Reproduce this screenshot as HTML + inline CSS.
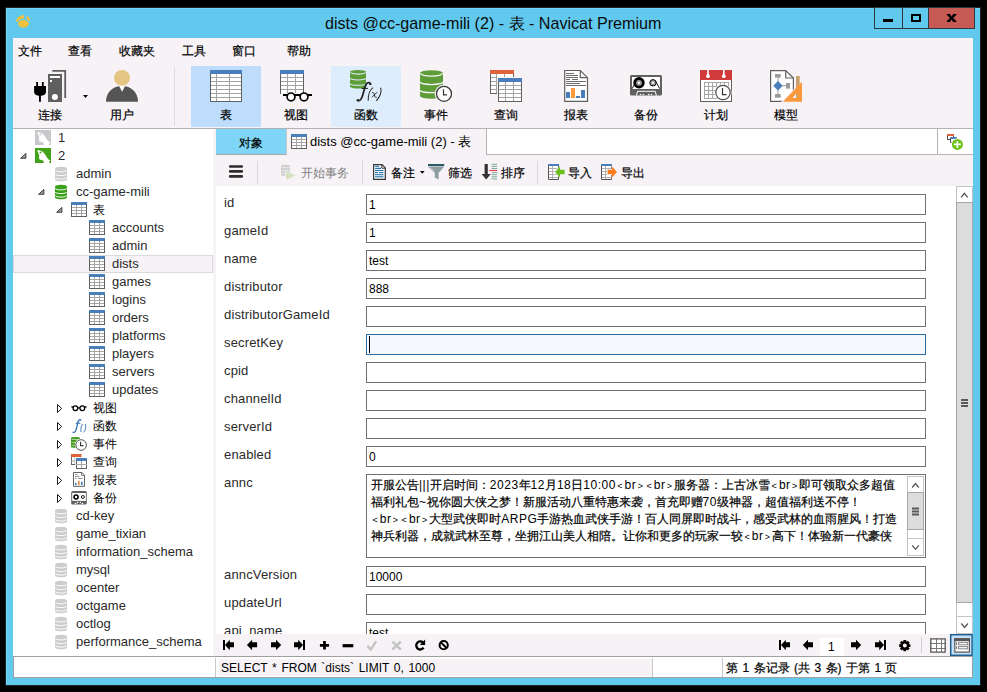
<!DOCTYPE html>
<html><head><meta charset="utf-8">
<style>
*{margin:0;padding:0;box-sizing:border-box}
html,body{width:987px;height:692px;overflow:hidden;background:#000}
body{position:relative;font-family:"Liberation Sans",sans-serif;font-size:12px;color:#000}
.a{position:absolute;white-space:nowrap}
#frame{left:5px;top:7px;width:976px;height:679px;background:#62c9ee;border:1px solid #1e2426}
#frame:after{content:"";position:absolute;left:0;top:0;right:0;bottom:0;border-left:1px solid #6fd6fb;border-top:1px solid #6fd6fb}
#title{left:325px;top:13px;font-size:16.1px;color:#0b0b0b}
#content{left:13px;top:38px;width:960px;height:640px;background:#f6f2f6}
.menu{top:43px;font-size:12px}
.tbl{top:107px;font-size:12px}
.wbtn{top:7px;height:22px;border:1px solid #2b3a40;background:#62c9ee}
svg{position:absolute;left:0;top:0}
.cj{-webkit-text-stroke:0.2px #000}
.tr{font-size:13px;line-height:18px;color:#2a2a2a}
.tr.cj{color:#000}
.fl{font-size:13px;line-height:18px;letter-spacing:0.15px;color:#2a2a2a}
.fv{font-size:12px;line-height:21px}
.an{font-size:12px;line-height:17px}
.asc{letter-spacing:0.5px;-webkit-text-stroke:0}
.lt{font-size:9px;padding:0 1.6px 0 1.4px;vertical-align:0.5px}
.t2{font-size:12px;line-height:16px}
.t2g{font-size:12px;line-height:16px}
</style></head><body>
<div id="frame" class="a"></div>
<svg width="987" height="60"><ellipse cx="23.4" cy="23.8" rx="5.3" ry="3.9" fill="#f2c13c"/><path d="M16.1 21.6 C16.4 18 19.5 15.3 23.9 15 V18.6 C20.8 18.9 18.6 20 17.6 21.8Z" fill="#f2c13c"/><path d="M27.4 15.9 C29.4 16.9 30.2 19.2 29.8 22 C29 20.6 27.6 19.6 26.1 18.8Z" fill="#f2c13c"/></svg>
<div id="title" class="a">dists @cc-game-mili (2) - 表 - Navicat Premium</div>
<div class="a wbtn" style="left:874px;width:29px"></div>
<div class="a" style="left:883px;top:19px;width:10px;height:3px;background:#000"></div>
<div class="a wbtn" style="left:903px;width:26px;border-left:none"></div>
<div class="a" style="left:911px;top:14px;width:10px;height:8px;border:2px solid #000"></div>
<div class="a wbtn" style="left:929px;width:46px;background:#c75a54;border-left:none"></div>
<svg width="987" height="40"><path d="M946.9 14 H950 L951.6 16.4 L953.2 14 H956.3 V15 L953.2 18 L956.3 21 V22 H953.2 L951.6 19.6 L950 22 H946.9 V21 L950 18 L946.9 15Z" fill="#000"/></svg>
<div id="content" class="a"></div>
<div class="a menu cj" style="left:18px">文件</div>
<div class="a menu cj" style="left:68px">查看</div>
<div class="a menu cj" style="left:119px">收藏夹</div>
<div class="a menu cj" style="left:182px">工具</div>
<div class="a menu cj" style="left:232px">窗口</div>
<div class="a menu cj" style="left:287px">帮助</div>
<div class="a" style="left:174px;top:67px;width:1px;height:59px;background:#dcdcdc"></div>
<div class="a" style="left:191px;top:66px;width:70px;height:61px;background:#bedcfb"></div>
<div class="a" style="left:331px;top:66px;width:70px;height:61px;background:#ddedfc"></div>
<div class="a tbl cj" style="left:38px">连接</div>
<div class="a tbl cj" style="left:110px">用户</div>
<div class="a tbl cj" style="left:220px">表</div>
<div class="a tbl cj" style="left:284px">视图</div>
<div class="a tbl cj" style="left:354px">函数</div>
<div class="a tbl cj" style="left:424px">事件</div>
<div class="a tbl cj" style="left:494px">查询</div>
<div class="a tbl cj" style="left:564px">报表</div>
<div class="a tbl cj" style="left:634px">备份</div>
<div class="a tbl cj" style="left:704px">计划</div>
<div class="a tbl cj" style="left:774px">模型</div>
<svg width="987" height="692"><path d="M52.3 70 H66.1 V98 H64.3 V71.8 H52.3Z" fill="#606060"/><rect x="48" y="74" width="14" height="28" fill="#606060"/><rect x="50" y="76" width="10" height="2" fill="#fff"/><rect x="50" y="80" width="2" height="2" fill="#fff"/><circle cx="54.9" cy="96.9" r="3" fill="#fff"/><rect x="36.2" y="82" width="1.8" height="4.5" fill="#000"/><rect x="41.9" y="82" width="1.8" height="4.5" fill="#000"/><path d="M34.1 86 H46 V91.5 C46 94.5 43.5 95.8 40 95.8 C36.5 95.8 34.1 94.5 34.1 91.5Z" fill="#000"/><rect x="39" y="95" width="1.9" height="6.8" fill="#000"/><path d="M83 95 H88 L85.5 98Z" fill="#000"/><circle cx="122" cy="77.9" r="8" fill="#e5c583"/><path d="M106 101.8 C106 92 113 86 122 86 C131 86 138 92 138 101.8Z" fill="#545454"/><path d="M119 85.8 H125.2 L122.1 91.7Z" fill="#fff"/><rect x="210" y="70" width="32" height="32" fill="#fff"/><rect x="216" y="70" width="1" height="32" fill="#a3a3a3"/><rect x="229" y="70" width="1" height="32" fill="#a3a3a3"/><rect x="210" y="77" width="32" height="1" fill="#a3a3a3"/><rect x="210" y="81" width="32" height="1" fill="#a3a3a3"/><rect x="210" y="85" width="32" height="1" fill="#a3a3a3"/><rect x="210" y="89" width="32" height="1" fill="#a3a3a3"/><rect x="210" y="93" width="32" height="1" fill="#a3a3a3"/><rect x="210" y="97" width="32" height="1" fill="#a3a3a3"/><rect x="210" y="70" width="1" height="32" fill="#606060"/><rect x="241" y="70" width="1" height="32" fill="#606060"/><rect x="210" y="101" width="32" height="1" fill="#606060"/><rect x="210" y="70" width="32" height="4" fill="#4a7ebb"/><rect x="280" y="70" width="24" height="24" fill="#fff"/><rect x="287" y="70" width="1" height="24" fill="#a3a3a3"/><rect x="295" y="70" width="1" height="24" fill="#a3a3a3"/><rect x="280" y="77" width="24" height="1" fill="#a3a3a3"/><rect x="280" y="81" width="24" height="1" fill="#a3a3a3"/><rect x="280" y="85" width="24" height="1" fill="#a3a3a3"/><rect x="280" y="89" width="24" height="1" fill="#a3a3a3"/><rect x="280" y="70" width="1" height="24" fill="#606060"/><rect x="303" y="70" width="1" height="24" fill="#606060"/><rect x="280" y="93" width="24" height="1" fill="#606060"/><rect x="280" y="70" width="24" height="4" fill="#4a7ebb"/><path d="M281 93 H313 V103 H281Z" fill="#f6f2f6"/><rect x="280" y="93" width="1" height="1" fill="#606060"/><path d="M283 95 h29" stroke="#000" stroke-width="2"/><circle cx="291" cy="96.9" r="3.9" fill="#fff" stroke="#000" stroke-width="1.7"/><circle cx="304" cy="96.9" r="3.9" fill="#fff" stroke="#000" stroke-width="1.7"/><path d="M350 71.92 A8.0 1.92 0 0 1 366 71.92 V86.58 A8.0 1.92 0 0 1 350 86.58Z" fill="#5e9c38"/><path d="M350.6 72.22 A7.4 1.92 0 0 0 365.4 72.22" fill="none" stroke="#ddedfc" stroke-width="1.1"/><path d="M350 78.1 A8.0 1.92 0 0 0 366 78.1" fill="none" stroke="#ddedfc" stroke-width="1.1"/><path d="M350 83.4 A8.0 1.92 0 0 0 366 83.4" fill="none" stroke="#ddedfc" stroke-width="1.1"/><path d="M358 101 L366.5 88 L370 84 L372 90 L362 102Z" fill="#ddedfc"/><path d="M370.2 83.6 C369.8 82 367.2 82.2 366 84.5 C364.8 86.8 364 91 362.6 95.5 C361.6 98.8 360.4 100.8 358.2 100.8" fill="none" stroke="#262626" stroke-width="1.8"/><circle cx="370.3" cy="83.9" r="1.25" fill="#262626"/><circle cx="357.8" cy="100.2" r="1.25" fill="#262626"/><path d="M361.6 88.4 H367.9" stroke="#262626" stroke-width="1.1"/><path d="M373 87.6 C369.5 90 368 93 368.2 100.8" fill="none" stroke="#333" stroke-width="1.1"/><path d="M380.6 87.6 C382 91.5 380 97 376.3 100.8" fill="none" stroke="#333" stroke-width="1.1"/><path d="M372.2 92.6 C373.6 92.2 374 93 374.4 95 C374.8 97 375.2 97.6 376.8 97.2 M377.4 92.4 C376 93 373.5 95.5 372 97.4" fill="none" stroke="#333" stroke-width="1"/><path d="M420 73.06 A11.5 2.76 0 0 1 443 73.06 V95.93999999999998 A11.5 2.76 0 0 1 420 95.93999999999998Z" fill="#5e9c38"/><path d="M420.6 73.36 A10.9 2.76 0 0 0 442.4 73.36" fill="none" stroke="#f6f2f6" stroke-width="1.3"/><path d="M420 81.8 A11.5 2.76 0 0 0 443 81.8" fill="none" stroke="#f6f2f6" stroke-width="1.3"/><path d="M420 89.9 A11.5 2.76 0 0 0 443 89.9" fill="none" stroke="#f6f2f6" stroke-width="1.3"/><circle cx="444" cy="93.8" r="9.299999999999999" fill="#f6f2f6"/><circle cx="444" cy="93.8" r="7.5" fill="#fff" stroke="#3a3a3a" stroke-width="1.3"/><path d="M443.5 89.3 V94.8 H447" fill="none" stroke="#333" stroke-width="1.2"/><rect x="490" y="70" width="24" height="24" fill="#fff"/><rect x="496" y="70" width="1" height="24" fill="#a3a3a3"/><rect x="504" y="70" width="1" height="24" fill="#a3a3a3"/><rect x="490" y="77" width="24" height="1" fill="#a3a3a3"/><rect x="490" y="81" width="24" height="1" fill="#a3a3a3"/><rect x="490" y="85" width="24" height="1" fill="#a3a3a3"/><rect x="490" y="89" width="24" height="1" fill="#a3a3a3"/><rect x="490" y="70" width="1" height="24" fill="#606060"/><rect x="513" y="70" width="1" height="24" fill="#606060"/><rect x="490" y="93" width="24" height="1" fill="#606060"/><rect x="490" y="70" width="24" height="4" fill="#e0623a"/><rect x="497" y="77" width="26" height="26" fill="#f6f2f6"/><rect x="498" y="78" width="24" height="24" fill="#fff"/><rect x="505" y="78" width="1" height="24" fill="#a3a3a3"/><rect x="513" y="78" width="1" height="24" fill="#a3a3a3"/><rect x="498" y="85" width="24" height="1" fill="#a3a3a3"/><rect x="498" y="89" width="24" height="1" fill="#a3a3a3"/><rect x="498" y="93" width="24" height="1" fill="#a3a3a3"/><rect x="498" y="97" width="24" height="1" fill="#a3a3a3"/><rect x="498" y="78" width="1" height="24" fill="#606060"/><rect x="521" y="78" width="1" height="24" fill="#606060"/><rect x="498" y="101" width="24" height="1" fill="#606060"/><rect x="498" y="78" width="24" height="4" fill="#4a7ebb"/><path d="M564.7 70.5 H580.3 L587.5 77.7 V101.3 H564.7Z" fill="#fff" stroke="#606060" stroke-width="1.2"/><path d="M580.3 70.5 V77.7 H587.5" fill="none" stroke="#606060" stroke-width="1.2"/><path d="M566 73.5 H574" stroke="#6b6b6b" stroke-width="1"/><path d="M566 75.5 H578" stroke="#6b6b6b" stroke-width="1"/><path d="M566 77.5 H578" stroke="#6b6b6b" stroke-width="1"/><path d="M566 79.5 H570" stroke="#6b6b6b" stroke-width="1"/><path d="M572 79.5 H578" stroke="#6b6b6b" stroke-width="1"/><path d="M566 81.5 H586" stroke="#6b6b6b" stroke-width="1"/><path d="M566 83.5 H580" stroke="#6b6b6b" stroke-width="1"/><path d="M566 85.5 H586" stroke="#6b6b6b" stroke-width="1"/><rect x="566" y="92" width="4" height="6" fill="#4a7ebb"/><rect x="571" y="88" width="4" height="10" fill="#fb9a3c"/><rect x="576" y="96" width="4" height="2" fill="#4a7ebb"/><rect x="581" y="90" width="4" height="8" fill="#4a7ebb"/><rect x="630" y="75" width="32" height="20.6" rx="1.5" fill="#606060"/><rect x="632" y="77" width="28" height="12" fill="#fff"/><circle cx="639" cy="82.8" r="4.3" fill="#a0a0a0" stroke="#000" stroke-width="2.8"/><circle cx="639" cy="82.8" r="1.1" fill="#fff"/><circle cx="653" cy="82.8" r="3.2" fill="#a0a0a0" stroke="#000" stroke-width="1"/><circle cx="653" cy="82.8" r="1" fill="#fff"/><path d="M634.6 84 L632.2 88.6 M655.8 81.3 L659.6 88.6" stroke="#000" stroke-width="0.9"/><path d="M636.5 95.6 L637.6 91.3 H655.2 L656.4 95.6" fill="none" stroke="#fff" stroke-width="1"/><circle cx="640.5" cy="94.4" r="0.75" fill="#fff"/><circle cx="643.3" cy="94.4" r="0.75" fill="#fff"/><circle cx="648.6" cy="94.4" r="0.75" fill="#fff"/><circle cx="651.4" cy="94.4" r="0.75" fill="#fff"/><rect x="700" y="70" width="32" height="32" fill="#fff"/><rect x="700" y="70" width="1" height="32" fill="#606060"/><rect x="731" y="70" width="1" height="32" fill="#606060"/><rect x="700" y="101" width="32" height="1" fill="#606060"/><rect x="700" y="70" width="32" height="10" fill="#d03a3a"/><rect x="707.2" y="70" width="1.6" height="6" fill="#fff"/><rect x="723" y="70" width="1.6" height="6" fill="#fff"/><circle cx="708" cy="76.2" r="1.9" fill="#fff"/><circle cx="723.8" cy="76.2" r="1.9" fill="#fff"/><rect x="704" y="82" width="1" height="17" fill="#a6a6a6"/><rect x="708" y="82" width="1" height="17" fill="#a6a6a6"/><rect x="712" y="82" width="1" height="17" fill="#a6a6a6"/><rect x="716" y="82" width="1" height="17" fill="#a6a6a6"/><rect x="720" y="82" width="1" height="17" fill="#a6a6a6"/><rect x="724" y="82" width="1" height="17" fill="#a6a6a6"/><rect x="728" y="82" width="1" height="17" fill="#a6a6a6"/><rect x="704" y="82" width="25" height="1" fill="#a6a6a6"/><rect x="704" y="86" width="25" height="1" fill="#a6a6a6"/><rect x="704" y="90" width="25" height="1" fill="#a6a6a6"/><rect x="704" y="94" width="25" height="1" fill="#a6a6a6"/><rect x="704" y="98" width="25" height="1" fill="#a6a6a6"/><circle cx="723" cy="92.5" r="8.6" fill="#fff"/><circle cx="723" cy="92.5" r="7.2" fill="#fff" stroke="#4a4a4a" stroke-width="1.2"/><path d="M722.5 88 V94.6 H726.5" fill="none" stroke="#333" stroke-width="1.2"/><path d="M770.6 70.6 H785.7 L793.4 78 V101.3 H770.6Z" fill="#fff" stroke="#606060" stroke-width="1.2"/><path d="M785.7 70.6 V78 H793.4" fill="none" stroke="#606060" stroke-width="1.2"/><path d="M778 76 V95 M778 85.7 H787" stroke="#9b9b9b" stroke-width="1"/><rect x="775" y="74" width="5.7" height="3.6" fill="#9b9b9b"/><rect x="786" y="83" width="4" height="5.6" fill="#9b9b9b"/><rect x="775" y="94" width="5.7" height="3.7" fill="#9b9b9b"/><path d="M778 81 L782.7 85.7 L778 90.4 L773.3 85.7Z" fill="#4a7ebb"/><path d="M781 102 L802.5 80.5 V102Z" fill="#f6f2f6"/><rect x="796" y="76" width="3.7" height="22" fill="#c9a06c"/><path d="M782.8 101.8 L802 81.8 V101.8Z M792.5 98 H797.4 V92.2Z" fill="#fb9a3c" fill-rule="evenodd"/></svg>
<div class="a" style="left:13px;top:128px;width:960px;height:1px;background:#b4afb3"></div>
<div class="a" style="left:13px;top:129px;width:200px;height:527px;background:#fff"></div>
<svg width="987" height="692"><rect x="13.5" y="255.5" width="199" height="17" fill="#f6f2f6" stroke="#dadada" stroke-width="1"/><rect x="35" y="130" width="16" height="15" fill="#c8c8cc"/><path transform="translate(35,130)" d="M2.2 2.7 C2.8 1.9 4.2 2.1 6.9 3.3 C8.7 4.3 10.1 6.2 11.5 8.7 C12.3 10 13.4 11.3 15.2 12.5 L15.3 13.2 L14.1 13.6 L14.1 15 L8.7 15 L8.7 13.1 C7.6 12.1 6 11.7 4.7 11.5 C4.2 11.2 4.1 10.9 4.1 10.6 L4.1 8.8 C4.2 7.4 4.1 6.3 3.6 5.4 C3.1 4.6 2.6 3.7 2.2 2.7Z" fill="#fff"/><circle cx="40.5" cy="134.4" r="0.95" fill="#c8c8cc"/><path d="M20.6 158.3 H25.9 V153.4Z" fill="#9a9a9a" stroke="#303030" stroke-width="0.9" stroke-linejoin="round"/><rect x="35" y="148" width="16" height="15" fill="#41a317"/><path transform="translate(35,148)" d="M2.2 2.7 C2.8 1.9 4.2 2.1 6.9 3.3 C8.7 4.3 10.1 6.2 11.5 8.7 C12.3 10 13.4 11.3 15.2 12.5 L15.3 13.2 L14.1 13.6 L14.1 15 L8.7 15 L8.7 13.1 C7.6 12.1 6 11.7 4.7 11.5 C4.2 11.2 4.1 10.9 4.1 10.6 L4.1 8.8 C4.2 7.4 4.1 6.3 3.6 5.4 C3.1 4.6 2.6 3.7 2.2 2.7Z" fill="#fff"/><circle cx="40.5" cy="152.4" r="0.95" fill="#41a317"/><path d="M55 168.6 A6 1.8 0 0 1 67 168.6 V179.4 A6 1.8 0 0 1 55 179.4Z" fill="#cdcdcd"/><path d="M55.3 170.3 A5.7 1.6 0 0 0 66.7 170.3" fill="none" stroke="#fff" stroke-width="0.9"/><path d="M55.3 174.0 A5.7 1.6 0 0 0 66.7 174.0" fill="none" stroke="#fff" stroke-width="0.9"/><path d="M55.3 177.5 A5.7 1.6 0 0 0 66.7 177.5" fill="none" stroke="#fff" stroke-width="0.9"/><path d="M38.6 194.3 H43.9 V189.4Z" fill="#9a9a9a" stroke="#303030" stroke-width="0.9" stroke-linejoin="round"/><path d="M55 186.6 A6 1.8 0 0 1 67 186.6 V197.4 A6 1.8 0 0 1 55 197.4Z" fill="#3a9f1a"/><path d="M55.3 188.3 A5.7 1.6 0 0 0 66.7 188.3" fill="none" stroke="#fff" stroke-width="0.9"/><path d="M55.3 192.0 A5.7 1.6 0 0 0 66.7 192.0" fill="none" stroke="#fff" stroke-width="0.9"/><path d="M55.3 195.5 A5.7 1.6 0 0 0 66.7 195.5" fill="none" stroke="#fff" stroke-width="0.9"/><path d="M56.6 212.3 H61.9 V207.4Z" fill="#9a9a9a" stroke="#303030" stroke-width="0.9" stroke-linejoin="round"/><rect x="71" y="202" width="16" height="15" fill="#fff"/><rect x="76" y="202" width="1" height="15" fill="#a6a6a6"/><rect x="81" y="202" width="1" height="15" fill="#a6a6a6"/><rect x="71" y="207" width="16" height="1" fill="#a6a6a6"/><rect x="71" y="210" width="16" height="1" fill="#a6a6a6"/><rect x="71" y="213" width="16" height="1" fill="#a6a6a6"/><rect x="71" y="202" width="1" height="15" fill="#606060"/><rect x="86" y="202" width="1" height="15" fill="#606060"/><rect x="71" y="216" width="16" height="1" fill="#606060"/><rect x="71" y="202" width="16" height="3" fill="#4a7ebb"/><rect x="89" y="220" width="16" height="15" fill="#fff"/><rect x="94" y="220" width="1" height="15" fill="#a6a6a6"/><rect x="99" y="220" width="1" height="15" fill="#a6a6a6"/><rect x="89" y="225" width="16" height="1" fill="#a6a6a6"/><rect x="89" y="228" width="16" height="1" fill="#a6a6a6"/><rect x="89" y="231" width="16" height="1" fill="#a6a6a6"/><rect x="89" y="220" width="1" height="15" fill="#606060"/><rect x="104" y="220" width="1" height="15" fill="#606060"/><rect x="89" y="234" width="16" height="1" fill="#606060"/><rect x="89" y="220" width="16" height="3" fill="#4a7ebb"/><rect x="89" y="238" width="16" height="15" fill="#fff"/><rect x="94" y="238" width="1" height="15" fill="#a6a6a6"/><rect x="99" y="238" width="1" height="15" fill="#a6a6a6"/><rect x="89" y="243" width="16" height="1" fill="#a6a6a6"/><rect x="89" y="246" width="16" height="1" fill="#a6a6a6"/><rect x="89" y="249" width="16" height="1" fill="#a6a6a6"/><rect x="89" y="238" width="1" height="15" fill="#606060"/><rect x="104" y="238" width="1" height="15" fill="#606060"/><rect x="89" y="252" width="16" height="1" fill="#606060"/><rect x="89" y="238" width="16" height="3" fill="#4a7ebb"/><rect x="89" y="256" width="16" height="15" fill="#fff"/><rect x="94" y="256" width="1" height="15" fill="#a6a6a6"/><rect x="99" y="256" width="1" height="15" fill="#a6a6a6"/><rect x="89" y="261" width="16" height="1" fill="#a6a6a6"/><rect x="89" y="264" width="16" height="1" fill="#a6a6a6"/><rect x="89" y="267" width="16" height="1" fill="#a6a6a6"/><rect x="89" y="256" width="1" height="15" fill="#606060"/><rect x="104" y="256" width="1" height="15" fill="#606060"/><rect x="89" y="270" width="16" height="1" fill="#606060"/><rect x="89" y="256" width="16" height="3" fill="#4a7ebb"/><rect x="89" y="274" width="16" height="15" fill="#fff"/><rect x="94" y="274" width="1" height="15" fill="#a6a6a6"/><rect x="99" y="274" width="1" height="15" fill="#a6a6a6"/><rect x="89" y="279" width="16" height="1" fill="#a6a6a6"/><rect x="89" y="282" width="16" height="1" fill="#a6a6a6"/><rect x="89" y="285" width="16" height="1" fill="#a6a6a6"/><rect x="89" y="274" width="1" height="15" fill="#606060"/><rect x="104" y="274" width="1" height="15" fill="#606060"/><rect x="89" y="288" width="16" height="1" fill="#606060"/><rect x="89" y="274" width="16" height="3" fill="#4a7ebb"/><rect x="89" y="292" width="16" height="15" fill="#fff"/><rect x="94" y="292" width="1" height="15" fill="#a6a6a6"/><rect x="99" y="292" width="1" height="15" fill="#a6a6a6"/><rect x="89" y="297" width="16" height="1" fill="#a6a6a6"/><rect x="89" y="300" width="16" height="1" fill="#a6a6a6"/><rect x="89" y="303" width="16" height="1" fill="#a6a6a6"/><rect x="89" y="292" width="1" height="15" fill="#606060"/><rect x="104" y="292" width="1" height="15" fill="#606060"/><rect x="89" y="306" width="16" height="1" fill="#606060"/><rect x="89" y="292" width="16" height="3" fill="#4a7ebb"/><rect x="89" y="310" width="16" height="15" fill="#fff"/><rect x="94" y="310" width="1" height="15" fill="#a6a6a6"/><rect x="99" y="310" width="1" height="15" fill="#a6a6a6"/><rect x="89" y="315" width="16" height="1" fill="#a6a6a6"/><rect x="89" y="318" width="16" height="1" fill="#a6a6a6"/><rect x="89" y="321" width="16" height="1" fill="#a6a6a6"/><rect x="89" y="310" width="1" height="15" fill="#606060"/><rect x="104" y="310" width="1" height="15" fill="#606060"/><rect x="89" y="324" width="16" height="1" fill="#606060"/><rect x="89" y="310" width="16" height="3" fill="#4a7ebb"/><rect x="89" y="328" width="16" height="15" fill="#fff"/><rect x="94" y="328" width="1" height="15" fill="#a6a6a6"/><rect x="99" y="328" width="1" height="15" fill="#a6a6a6"/><rect x="89" y="333" width="16" height="1" fill="#a6a6a6"/><rect x="89" y="336" width="16" height="1" fill="#a6a6a6"/><rect x="89" y="339" width="16" height="1" fill="#a6a6a6"/><rect x="89" y="328" width="1" height="15" fill="#606060"/><rect x="104" y="328" width="1" height="15" fill="#606060"/><rect x="89" y="342" width="16" height="1" fill="#606060"/><rect x="89" y="328" width="16" height="3" fill="#4a7ebb"/><rect x="89" y="346" width="16" height="15" fill="#fff"/><rect x="94" y="346" width="1" height="15" fill="#a6a6a6"/><rect x="99" y="346" width="1" height="15" fill="#a6a6a6"/><rect x="89" y="351" width="16" height="1" fill="#a6a6a6"/><rect x="89" y="354" width="16" height="1" fill="#a6a6a6"/><rect x="89" y="357" width="16" height="1" fill="#a6a6a6"/><rect x="89" y="346" width="1" height="15" fill="#606060"/><rect x="104" y="346" width="1" height="15" fill="#606060"/><rect x="89" y="360" width="16" height="1" fill="#606060"/><rect x="89" y="346" width="16" height="3" fill="#4a7ebb"/><rect x="89" y="364" width="16" height="15" fill="#fff"/><rect x="94" y="364" width="1" height="15" fill="#a6a6a6"/><rect x="99" y="364" width="1" height="15" fill="#a6a6a6"/><rect x="89" y="369" width="16" height="1" fill="#a6a6a6"/><rect x="89" y="372" width="16" height="1" fill="#a6a6a6"/><rect x="89" y="375" width="16" height="1" fill="#a6a6a6"/><rect x="89" y="364" width="1" height="15" fill="#606060"/><rect x="104" y="364" width="1" height="15" fill="#606060"/><rect x="89" y="378" width="16" height="1" fill="#606060"/><rect x="89" y="364" width="16" height="3" fill="#4a7ebb"/><rect x="89" y="382" width="16" height="15" fill="#fff"/><rect x="94" y="382" width="1" height="15" fill="#a6a6a6"/><rect x="99" y="382" width="1" height="15" fill="#a6a6a6"/><rect x="89" y="387" width="16" height="1" fill="#a6a6a6"/><rect x="89" y="390" width="16" height="1" fill="#a6a6a6"/><rect x="89" y="393" width="16" height="1" fill="#a6a6a6"/><rect x="89" y="382" width="1" height="15" fill="#606060"/><rect x="104" y="382" width="1" height="15" fill="#606060"/><rect x="89" y="396" width="16" height="1" fill="#606060"/><rect x="89" y="382" width="16" height="3" fill="#4a7ebb"/><path d="M57.5 404.5 L61.6 408.5 L57.5 412.5Z" fill="#fff" stroke="#1a1a1a" stroke-width="1"/><path d="M71.4 406.59999999999997 L73.4 407.4 M86.6 406.59999999999997 L84.6 407.4 M77.6 407.8 H80.2" stroke="#000" stroke-width="1.2"/><circle cx="75.4" cy="408.2" r="2.35" fill="#fff" stroke="#000" stroke-width="1.25"/><circle cx="82.3" cy="408.2" r="2.35" fill="#fff" stroke="#000" stroke-width="1.25"/><path d="M57.5 422.5 L61.6 426.5 L57.5 430.5Z" fill="#fff" stroke="#1a1a1a" stroke-width="1"/><path d="M81.2 420.4 C80 419.2 78.6 419.8 78 422 C77.2 425 76.6 429 75.6 431 C74.8 432.4 73.6 432.6 72.6 432" fill="none" stroke="#2e6db4" stroke-width="1.3"/><path d="M75.6 423.2 H80.4" stroke="#2e6db4" stroke-width="1"/><path d="M82.6 424 C81 426 80.6 429 81 432" fill="none" stroke="#2e6db4" stroke-width="0.9"/><path d="M85.2 424 C86.4 427 85.6 430 83.6 432.4" fill="none" stroke="#2e6db4" stroke-width="0.9"/><path d="M57.5 440.5 L61.6 444.5 L57.5 448.5Z" fill="#fff" stroke="#1a1a1a" stroke-width="1"/><path d="M71 438 A4.4 1 0 0 1 79.8 438 V446.8 A4.4 1 0 0 1 71 446.8Z" fill="#3f9a1e"/><path d="M71.5 439.5 H79.2" stroke="#c9e3b9" stroke-width="0.8"/><path d="M71.5 442.4 H79.2" stroke="#c9e3b9" stroke-width="0.8"/><path d="M71.5 445.2 H79.2" stroke="#c9e3b9" stroke-width="0.8"/><circle cx="81.1" cy="445" r="6.3" fill="#fff"/><circle cx="81.1" cy="445" r="5.3" fill="#fff" stroke="#555" stroke-width="1"/><path d="M80.6 441.8 V445.6 H83.4" fill="none" stroke="#333" stroke-width="1.1"/><path d="M57.5 458.5 L61.6 462.5 L57.5 466.5Z" fill="#fff" stroke="#1a1a1a" stroke-width="1"/><rect x="71" y="454" width="10" height="11" fill="#fff"/><rect x="71" y="454" width="1" height="11" fill="#606060"/><rect x="80" y="454" width="1" height="11" fill="#606060"/><rect x="71" y="464" width="10" height="1" fill="#606060"/><rect x="74.5" y="457" width="1" height="7" fill="#a6a6a6"/><rect x="71" y="460.5" width="10" height="1" fill="#a6a6a6"/><rect x="71" y="454" width="10.5" height="3" fill="#e0623a"/><rect x="75.2" y="457.2" width="12" height="11.5" fill="#fff"/><rect x="76" y="458" width="11" height="10.6" fill="#fff"/><rect x="76" y="458" width="1" height="10.6" fill="#606060"/><rect x="86" y="458" width="1" height="10.6" fill="#606060"/><rect x="76" y="468" width="11" height="1" fill="#606060"/><rect x="81" y="461" width="1" height="7" fill="#a6a6a6"/><rect x="76" y="464" width="11" height="1" fill="#a6a6a6"/><rect x="76" y="458" width="11" height="3" fill="#4a7ebb"/><path d="M57.5 476.5 L61.6 480.5 L57.5 484.5Z" fill="#fff" stroke="#1a1a1a" stroke-width="1"/><path d="M73.5 472.5 H81.8 L84.5 475.2 V486.3 H73.5Z" fill="#fff" stroke="#606060" stroke-width="1"/><path d="M81.5 472.5 V475.5 H84.5" fill="none" stroke="#606060" stroke-width="0.8"/><path d="M75 474.5 H77.5" stroke="#777" stroke-width="0.8"/><path d="M75 476.5 H79.5" stroke="#777" stroke-width="0.8"/><path d="M75 478.5 H76.5" stroke="#777" stroke-width="0.8"/><path d="M78 478.5 H82.5" stroke="#777" stroke-width="0.8"/><rect x="75" y="483" width="1.6" height="2" fill="#3b7ac4"/><rect x="78" y="480.8" width="1.6" height="4.2" fill="#f08a30"/><rect x="81" y="481.8" width="1.6" height="3.2" fill="#3b7ac4"/><path d="M57.5 494.5 L61.6 498.5 L57.5 502.5Z" fill="#fff" stroke="#1a1a1a" stroke-width="1"/><rect x="71.2" y="491" width="15.6" height="13.6" rx="1.6" fill="#606060"/><rect x="72.2" y="493" width="13.7" height="7.9" fill="#fff"/><circle cx="76.1" cy="497" r="2" fill="#fff" stroke="#000" stroke-width="1.6"/><circle cx="82.9" cy="497" r="1.5" fill="#fff" stroke="#000" stroke-width="0.9"/><circle cx="75.5" cy="503.5" r="0.8" fill="#fff"/><circle cx="77.5" cy="502.5" r="0.8" fill="#fff"/><circle cx="80.4" cy="502.5" r="0.8" fill="#fff"/><circle cx="82.5" cy="503.5" r="0.8" fill="#fff"/><path d="M55 510.6 A6 1.8 0 0 1 67 510.6 V521.4 A6 1.8 0 0 1 55 521.4Z" fill="#cdcdcd"/><path d="M55.3 512.3 A5.7 1.6 0 0 0 66.7 512.3" fill="none" stroke="#fff" stroke-width="0.9"/><path d="M55.3 516.0 A5.7 1.6 0 0 0 66.7 516.0" fill="none" stroke="#fff" stroke-width="0.9"/><path d="M55.3 519.5 A5.7 1.6 0 0 0 66.7 519.5" fill="none" stroke="#fff" stroke-width="0.9"/><path d="M55 528.6 A6 1.8 0 0 1 67 528.6 V539.4 A6 1.8 0 0 1 55 539.4Z" fill="#cdcdcd"/><path d="M55.3 530.3 A5.7 1.6 0 0 0 66.7 530.3" fill="none" stroke="#fff" stroke-width="0.9"/><path d="M55.3 534.0 A5.7 1.6 0 0 0 66.7 534.0" fill="none" stroke="#fff" stroke-width="0.9"/><path d="M55.3 537.5 A5.7 1.6 0 0 0 66.7 537.5" fill="none" stroke="#fff" stroke-width="0.9"/><path d="M55 546.6 A6 1.8 0 0 1 67 546.6 V557.4 A6 1.8 0 0 1 55 557.4Z" fill="#cdcdcd"/><path d="M55.3 548.3 A5.7 1.6 0 0 0 66.7 548.3" fill="none" stroke="#fff" stroke-width="0.9"/><path d="M55.3 552.0 A5.7 1.6 0 0 0 66.7 552.0" fill="none" stroke="#fff" stroke-width="0.9"/><path d="M55.3 555.5 A5.7 1.6 0 0 0 66.7 555.5" fill="none" stroke="#fff" stroke-width="0.9"/><path d="M55 564.6 A6 1.8 0 0 1 67 564.6 V575.4 A6 1.8 0 0 1 55 575.4Z" fill="#cdcdcd"/><path d="M55.3 566.3 A5.7 1.6 0 0 0 66.7 566.3" fill="none" stroke="#fff" stroke-width="0.9"/><path d="M55.3 570.0 A5.7 1.6 0 0 0 66.7 570.0" fill="none" stroke="#fff" stroke-width="0.9"/><path d="M55.3 573.5 A5.7 1.6 0 0 0 66.7 573.5" fill="none" stroke="#fff" stroke-width="0.9"/><path d="M55 582.6 A6 1.8 0 0 1 67 582.6 V593.4 A6 1.8 0 0 1 55 593.4Z" fill="#cdcdcd"/><path d="M55.3 584.3 A5.7 1.6 0 0 0 66.7 584.3" fill="none" stroke="#fff" stroke-width="0.9"/><path d="M55.3 588.0 A5.7 1.6 0 0 0 66.7 588.0" fill="none" stroke="#fff" stroke-width="0.9"/><path d="M55.3 591.5 A5.7 1.6 0 0 0 66.7 591.5" fill="none" stroke="#fff" stroke-width="0.9"/><path d="M55 600.6 A6 1.8 0 0 1 67 600.6 V611.4 A6 1.8 0 0 1 55 611.4Z" fill="#cdcdcd"/><path d="M55.3 602.3 A5.7 1.6 0 0 0 66.7 602.3" fill="none" stroke="#fff" stroke-width="0.9"/><path d="M55.3 606.0 A5.7 1.6 0 0 0 66.7 606.0" fill="none" stroke="#fff" stroke-width="0.9"/><path d="M55.3 609.5 A5.7 1.6 0 0 0 66.7 609.5" fill="none" stroke="#fff" stroke-width="0.9"/><path d="M55 618.6 A6 1.8 0 0 1 67 618.6 V629.4 A6 1.8 0 0 1 55 629.4Z" fill="#cdcdcd"/><path d="M55.3 620.3 A5.7 1.6 0 0 0 66.7 620.3" fill="none" stroke="#fff" stroke-width="0.9"/><path d="M55.3 624.0 A5.7 1.6 0 0 0 66.7 624.0" fill="none" stroke="#fff" stroke-width="0.9"/><path d="M55.3 627.5 A5.7 1.6 0 0 0 66.7 627.5" fill="none" stroke="#fff" stroke-width="0.9"/><path d="M55 636.6 A6 1.8 0 0 1 67 636.6 V647.4 A6 1.8 0 0 1 55 647.4Z" fill="#cdcdcd"/><path d="M55.3 638.3 A5.7 1.6 0 0 0 66.7 638.3" fill="none" stroke="#fff" stroke-width="0.9"/><path d="M55.3 642.0 A5.7 1.6 0 0 0 66.7 642.0" fill="none" stroke="#fff" stroke-width="0.9"/><path d="M55.3 645.5 A5.7 1.6 0 0 0 66.7 645.5" fill="none" stroke="#fff" stroke-width="0.9"/></svg><div class="a tr" style="left:58px;top:129px">1</div>
<div class="a tr" style="left:58px;top:147px">2</div>
<div class="a tr" style="left:76px;top:165px">admin</div>
<div class="a tr" style="left:76px;top:183px">cc-game-mili</div>
<div class="a tr" style="left:93px;top:201px;font-size:12px;color:#000">表</div>
<div class="a tr" style="left:112px;top:219px">accounts</div>
<div class="a tr" style="left:112px;top:237px">admin</div>
<div class="a tr" style="left:112px;top:255px">dists</div>
<div class="a tr" style="left:112px;top:273px">games</div>
<div class="a tr" style="left:112px;top:291px">logins</div>
<div class="a tr" style="left:112px;top:309px">orders</div>
<div class="a tr" style="left:112px;top:327px">platforms</div>
<div class="a tr" style="left:112px;top:345px">players</div>
<div class="a tr" style="left:112px;top:363px">servers</div>
<div class="a tr" style="left:112px;top:381px">updates</div>
<div class="a tr" style="left:93px;top:399px;font-size:12px;color:#000">视图</div>
<div class="a tr" style="left:93px;top:417px;font-size:12px;color:#000">函数</div>
<div class="a tr" style="left:93px;top:435px;font-size:12px;color:#000">事件</div>
<div class="a tr" style="left:93px;top:453px;font-size:12px;color:#000">查询</div>
<div class="a tr" style="left:93px;top:471px;font-size:12px;color:#000">报表</div>
<div class="a tr" style="left:93px;top:489px;font-size:12px;color:#000">备份</div>
<div class="a tr" style="left:76px;top:507px">cd-key</div>
<div class="a tr" style="left:76px;top:525px">game_tixian</div>
<div class="a tr" style="left:76px;top:543px">information_schema</div>
<div class="a tr" style="left:76px;top:561px">mysql</div>
<div class="a tr" style="left:76px;top:579px">ocenter</div>
<div class="a tr" style="left:76px;top:597px">octgame</div>
<div class="a tr" style="left:76px;top:615px">octlog</div>
<div class="a tr" style="left:76px;top:633px">performance_schema</div>
<div class="a" style="left:216px;top:129px;width:71px;height:26px;background:#7fd5f5;border-bottom:1px solid #aba5a7"></div>
<div class="a" style="left:486px;top:128px;width:487px;height:27px;background:#fff;border:1px solid #b4b4b4;border-right:none"></div>
<div class="a" style="left:937px;top:129px;width:1px;height:25px;background:#b4b4b4"></div>
<div class="a" style="left:286px;top:129px;width:1px;height:26px;background:#c8c8c8"></div>
<div class="a t2 cj" style="left:239px;top:135px">对象</div>
<div class="a t2" style="left:310px;top:134px;font-size:13px">dists @cc-game-mili (2) - 表</div>
<div class="a t2g" style="left:301px;top:165px;color:#808080">开始事务</div>
<div class="a t2g cj" style="left:391px;top:165px">备注</div>
<div class="a t2g cj" style="left:448px;top:165px">筛选</div>
<div class="a t2g cj" style="left:501px;top:165px">排序</div>
<div class="a t2g cj" style="left:568px;top:165px">导入</div>
<div class="a t2g cj" style="left:621px;top:165px">导出</div>
<svg width="987" height="692"><rect x="291" y="134" width="16" height="15" fill="#fff"/><rect x="296" y="134" width="1" height="15" fill="#a6a6a6"/><rect x="301" y="134" width="1" height="15" fill="#a6a6a6"/><rect x="291" y="139" width="16" height="1" fill="#a6a6a6"/><rect x="291" y="142" width="16" height="1" fill="#a6a6a6"/><rect x="291" y="145" width="16" height="1" fill="#a6a6a6"/><rect x="291" y="134" width="1" height="15" fill="#606060"/><rect x="306" y="134" width="1" height="15" fill="#606060"/><rect x="291" y="148" width="16" height="1" fill="#606060"/><rect x="291" y="134" width="16" height="3" fill="#4a7ebb"/><rect x="947" y="134" width="7" height="6" fill="#fff"/><path d="M947.5 136 V139.5 H953.5 V136" fill="none" stroke="#444" stroke-width="1"/><rect x="947" y="134" width="7" height="2" fill="#e0623a"/><rect x="950" y="137" width="7" height="6" fill="#fff"/><path d="M950.5 139 V142.5 H956.5 V139" fill="none" stroke="#444" stroke-width="1"/><rect x="950" y="137" width="7" height="2" fill="#4a7ebb"/><circle cx="957.4" cy="144.4" r="6.2" fill="#fff"/><circle cx="957.4" cy="144.4" r="5.5" fill="#6cc417"/><path d="M957.4 140.9 V147.9 M953.9 144.4 H960.9" stroke="#fff" stroke-width="1.6"/><path d="M230.2 166.5 H241.8" stroke="#2d2d2d" stroke-width="2.6" stroke-linecap="round"/><path d="M230.2 171.4 H241.8" stroke="#2d2d2d" stroke-width="2.6" stroke-linecap="round"/><path d="M230.2 176.4 H241.8" stroke="#2d2d2d" stroke-width="2.6" stroke-linecap="round"/><rect x="257" y="161" width="1" height="23" fill="#d8d8d8"/><path d="M281 166 A4.5 1.2 0 0 1 290 166 V174.8 A4.5 1.2 0 0 1 281 174.8Z" fill="#d0d0d0"/><path d="M281.3 167.6 H289.7" stroke="#eeeeee" stroke-width="0.8"/><path d="M281.3 170.6 H289.7" stroke="#eeeeee" stroke-width="0.8"/><path d="M281.3 173.4 H289.7" stroke="#eeeeee" stroke-width="0.8"/><path d="M285.2 170.4 L296 175.5 L285.2 180.6Z" fill="#f6f2f6"/><path d="M286 171.2 L295.5 175.5 L286 179.8Z" fill="#d3e1bf"/><rect x="362" y="161" width="1" height="23" fill="#d8d8d8"/><path d="M373.6 164.6 H382 L385.3 167.9 V179.3 H373.6Z" fill="#fff" stroke="#333" stroke-width="1.2"/><path d="M381.8 164.6 V168.2 H385.3" fill="none" stroke="#333" stroke-width="1"/><path d="M375 166.3 H379" stroke="#1e6fa8" stroke-width="1.1"/><path d="M375 168.4 H381" stroke="#1e6fa8" stroke-width="1.1"/><path d="M377.5 168.4 H381" stroke="#1e6fa8" stroke-width="1.1"/><path d="M375 170.5 H383.5" stroke="#1e6fa8" stroke-width="1.1"/><path d="M375 172.6 H378" stroke="#1e6fa8" stroke-width="1.1"/><path d="M379 172.6 H383.5" stroke="#1e6fa8" stroke-width="1.1"/><path d="M375 174.7 H383.5" stroke="#1e6fa8" stroke-width="1.1"/><path d="M375 176.8 H383.5" stroke="#1e6fa8" stroke-width="1.1"/><path d="M420 171 H424.6 L422.3 173.8Z" fill="#000"/><path d="M428 164 H444.2 V166.2 H428Z" fill="#2a5a62"/><path d="M428.2 166.8 H444 L438.6 173 V179.6 L434.8 177.6 V173Z" fill="#8d9ea3"/><path d="M430.5 167.6 L434.4 171.6" stroke="#d6dee0" stroke-width="0.8"/><path d="M484.6 164 H487.8 V174 H490.8 L486.2 179.6 L481.6 174 H484.6Z" fill="#333"/><path d="M491.6 164.3 H497" stroke="#6e9f8c" stroke-width="0.9"/><path d="M491.6 166.4 H497" stroke="#6e9f8c" stroke-width="0.9"/><path d="M491.6 168.5 H497" stroke="#6e9f8c" stroke-width="0.9"/><path d="M491.6 172.6 H497" stroke="#6e9f8c" stroke-width="0.9"/><path d="M491.6 174.7 H497" stroke="#6e9f8c" stroke-width="0.9"/><path d="M491.6 176.8 H497" stroke="#6e9f8c" stroke-width="0.9"/><path d="M491.6 178.9 H497" stroke="#6e9f8c" stroke-width="0.9"/><path d="M489.4 170.5 H497" stroke="#e8343a" stroke-width="1"/><rect x="537" y="161" width="1" height="23" fill="#d8d8d8"/><rect x="548" y="164" width="11" height="16" fill="#fff"/><path d="M548.5 164.5 V179.5 H558.5 V164.5" fill="none" stroke="#555" stroke-width="1"/><path d="M549 168.5 H558" stroke="#b0b0b0" stroke-width="1"/><path d="M549 171.5 H558" stroke="#b0b0b0" stroke-width="1"/><path d="M549 174.5 H558" stroke="#b0b0b0" stroke-width="1"/><path d="M549 177.5 H558" stroke="#b0b0b0" stroke-width="1"/><path d="M552.5 166 V179" stroke="#b0b0b0" stroke-width="1"/><rect x="548" y="164" width="11" height="2" fill="#4a7ebb"/><path d="M554.2 172 L560.4 165.6 V169 H565 V175 H560.4 V178.4Z" fill="#f6f2f6"/><path d="M555 172 L560 166.6 V169.8 H564.6 V174.2 H560 V177.4Z" fill="#6cbe1e"/><rect x="601" y="164" width="11" height="16" fill="#fff"/><path d="M601.5 164.5 V179.5 H611.5 V164.5" fill="none" stroke="#555" stroke-width="1"/><path d="M602 168.5 H611" stroke="#b0b0b0" stroke-width="1"/><path d="M602 171.5 H611" stroke="#b0b0b0" stroke-width="1"/><path d="M602 174.5 H611" stroke="#b0b0b0" stroke-width="1"/><path d="M602 177.5 H611" stroke="#b0b0b0" stroke-width="1"/><path d="M605.5 166 V179" stroke="#b0b0b0" stroke-width="1"/><rect x="601" y="164" width="11" height="2" fill="#4a7ebb"/><path d="M617.8 172 L611.6 165.6 V169 H607 V175 H611.6 V178.4Z" fill="#f6f2f6"/><path d="M617 172 L612 166.6 V169.8 H607.6 V174.2 H612 V177.4Z" fill="#ff7a1a"/></svg>
<div class="a" style="left:216px;top:186px;width:757px;height:448px;background:#fff;overflow:hidden"></div>
<div class="a" style="left:216px;top:186px;width:740px;height:448px;overflow:hidden"><div class="a" style="left:-216px;top:-186px;width:987px;height:692px"><div class="a fl" style="left:224px;top:194px">id</div>
<div class="a" style="left:366px;top:194px;width:560px;height:21px;border:1px solid #707070;background:#fff"></div>
<div class="a fv" style="left:369px;top:195px">1</div>
<div class="a fl" style="left:224px;top:222px">gameId</div>
<div class="a" style="left:366px;top:222px;width:560px;height:21px;border:1px solid #707070;background:#fff"></div>
<div class="a fv" style="left:369px;top:223px">1</div>
<div class="a fl" style="left:224px;top:250px">name</div>
<div class="a" style="left:366px;top:250px;width:560px;height:21px;border:1px solid #707070;background:#fff"></div>
<div class="a fv" style="left:369px;top:251px">test</div>
<div class="a fl" style="left:224px;top:278px">distributor</div>
<div class="a" style="left:366px;top:278px;width:560px;height:21px;border:1px solid #707070;background:#fff"></div>
<div class="a fv" style="left:369px;top:279px">888</div>
<div class="a fl" style="left:224px;top:306px">distributorGameId</div>
<div class="a" style="left:366px;top:306px;width:560px;height:21px;border:1px solid #707070;background:#fff"></div>
<div class="a fl" style="left:224px;top:334px">secretKey</div>
<div class="a" style="left:366px;top:334px;width:560px;height:21px;border:1px solid #2d6ba3;background:#f5f9ff"></div>
<div class="a" style="left:369px;top:336px;width:1px;height:17px;background:#000"></div>
<div class="a fl" style="left:224px;top:362px">cpid</div>
<div class="a" style="left:366px;top:362px;width:560px;height:21px;border:1px solid #707070;background:#fff"></div>
<div class="a fl" style="left:224px;top:390px">channelId</div>
<div class="a" style="left:366px;top:390px;width:560px;height:21px;border:1px solid #707070;background:#fff"></div>
<div class="a fl" style="left:224px;top:418px">serverId</div>
<div class="a" style="left:366px;top:418px;width:560px;height:21px;border:1px solid #707070;background:#fff"></div>
<div class="a fl" style="left:224px;top:446px">enabled</div>
<div class="a" style="left:366px;top:446px;width:560px;height:21px;border:1px solid #707070;background:#fff"></div>
<div class="a fv" style="left:369px;top:447px">0</div>
<div class="a fl" style="left:224px;top:474px">annc</div>
<div class="a" style="left:366px;top:474px;width:560px;height:84px;border:1px solid #707070;background:#fff"></div>
<div class="a fl" style="left:224px;top:566px">anncVersion</div>
<div class="a" style="left:366px;top:566px;width:560px;height:21px;border:1px solid #707070;background:#fff"></div>
<div class="a fv" style="left:369px;top:567px">10000</div>
<div class="a fl" style="left:224px;top:594px">updateUrl</div>
<div class="a" style="left:366px;top:594px;width:560px;height:21px;border:1px solid #707070;background:#fff"></div>
<div class="a fl" style="left:224px;top:622px">api_name</div>
<div class="a" style="left:366px;top:622px;width:560px;height:21px;border:1px solid #707070;background:#fff"></div>
<div class="a fv" style="left:369px;top:623px">test</div>
<div class="a an cj" style="left:371px;top:477px">开服公告<span class="asc">|||</span>开启时间：<span class="asc">2023</span>年<span class="asc">12</span>月<span class="asc">18</span>日<span class="asc">10:00<span class="lt">&lt;</span>br<span class="lt">&gt;</span><span class="lt">&lt;</span>br<span class="lt">&gt;</span></span>服务器：上古冰雪<span class="asc"><span class="lt">&lt;</span>br<span class="lt">&gt;</span></span>即可领取众多超值</div>
<div class="a an cj" style="left:371px;top:494px">福利礼包<span class="asc">~</span>祝你圆大侠之梦！新服活动八重特惠来袭，首充即赠<span class="asc">70</span>级神器，超值福利送不停！</div>
<div class="a an cj" style="left:371px;top:511px"><span class="asc"><span class="lt">&lt;</span>br<span class="lt">&gt;</span><span class="lt">&lt;</span>br<span class="lt">&gt;</span></span>大型武侠即时<span class="asc">ARPG</span>手游热血武侠手游！百人同屏即时战斗，感受武林的血雨腥风！打造</div>
<div class="a an cj" style="left:371px;top:528px">神兵利器，成就武林至尊，坐拥江山美人相陪。让你和更多的玩家一较<span class="asc"><span class="lt">&lt;</span>br<span class="lt">&gt;</span></span>高下！体验新一代豪侠</div></div></div>
<svg width="987" height="692"><rect x="223" y="640" width="2" height="10" fill="#000"/><path d="M225 645 L229.8 639.8 V642.3 H234 V647.3 H229.8 V650.2Z" fill="#000"/><path d="M246.9 645 L252.1 639.8 V642.3 H257.1 V647.3 H252.1 V650.2Z" fill="#000"/><path d="M281.2 645 L276 639.8 V642.3 H271 V647.3 H276 V650.2Z" fill="#000"/><rect x="303" y="640" width="2" height="10" fill="#000"/><path d="M303 645 L298.2 639.8 V642.3 H294 V647.3 H298.2 V650.2Z" fill="#000"/><path d="M319.9 645.4 H329.1 M324.5 641.1 V649.6" stroke="#000" stroke-width="2.8"/><path d="M342.6 645.7 H353.3" stroke="#000" stroke-width="3.2"/><path d="M367.5 645.8 L370.6 649.6 L376.2 641.4" fill="none" stroke="#c4c4c4" stroke-width="2.4"/><path d="M392.4 641.6 L400.8 649.6 M400.8 641.6 L392.4 649.6" stroke="#c4c4c4" stroke-width="2.6"/><path d="M423 642.6 A4 4 0 1 0 423.6 647.6" fill="none" stroke="#000" stroke-width="2.3"/><path d="M425.1 639.6 V645 H419.8Z" fill="#000"/><circle cx="443.7" cy="645.2" r="4.1" fill="none" stroke="#000" stroke-width="2"/><path d="M440.9 642.4 L446.5 648" stroke="#000" stroke-width="2"/><rect x="779" y="640" width="2" height="10" fill="#000"/><path d="M781 645 L785.8 639.8 V642.3 H790 V647.3 H785.8 V650.2Z" fill="#000"/><path d="M802.8 645 L808.0 639.8 V642.3 H813.0 V647.3 H808.0 V650.2Z" fill="#000"/><path d="M861.2 645 L856 639.8 V642.3 H851 V647.3 H856 V650.2Z" fill="#000"/><rect x="884" y="640" width="2" height="10" fill="#000"/><path d="M884 645 L879.2 639.8 V642.3 H875 V647.3 H879.2 V650.2Z" fill="#000"/><rect x="820" y="638" width="24" height="18" fill="#fff"/><rect x="903.4" y="640.0" width="2.8" height="3" fill="#000" transform="rotate(0 904.8 645.6)"/><rect x="903.4" y="640.0" width="2.8" height="3" fill="#000" transform="rotate(45 904.8 645.6)"/><rect x="903.4" y="640.0" width="2.8" height="3" fill="#000" transform="rotate(90 904.8 645.6)"/><rect x="903.4" y="640.0" width="2.8" height="3" fill="#000" transform="rotate(135 904.8 645.6)"/><rect x="903.4" y="640.0" width="2.8" height="3" fill="#000" transform="rotate(180 904.8 645.6)"/><rect x="903.4" y="640.0" width="2.8" height="3" fill="#000" transform="rotate(225 904.8 645.6)"/><rect x="903.4" y="640.0" width="2.8" height="3" fill="#000" transform="rotate(270 904.8 645.6)"/><rect x="903.4" y="640.0" width="2.8" height="3" fill="#000" transform="rotate(315 904.8 645.6)"/><circle cx="904.8" cy="645.6" r="3.2" fill="none" stroke="#000" stroke-width="2.4"/><rect x="921" y="637" width="1" height="16" fill="#d0d0d0"/><rect x="930.5" y="638.5" width="15" height="14" fill="#fff"/><path d="M936.5 639 V652 M941.5 639 V652 M931 643.5 H945 M931 648.5 H945" fill="none" stroke="#777" stroke-width="1"/><path d="M930.8 638.8 H945.2 V652.2 H930.8Z" fill="none" stroke="#555" stroke-width="1.3"/><rect x="950.7" y="634.7" width="21.4" height="20.6" fill="#c5e0fb" stroke="#1f5e91" stroke-width="1.5"/><rect x="954.2" y="638.2" width="15.8" height="14.6" fill="#fff"/><path d="M954.8 638.8 H969.4 V652.2 H954.8Z" fill="none" stroke="#555" stroke-width="1.2"/><rect x="954.2" y="638.2" width="15.8" height="3" fill="#555"/><rect x="956" y="642.4" width="1.1" height="2.6" fill="#777"/><rect x="956" y="646.4" width="1.1" height="2.6" fill="#777"/><rect x="958.6" y="642.6" width="9" height="2.2" fill="none" stroke="#888" stroke-width="1"/><rect x="958.6" y="646.6" width="9" height="2.2" fill="none" stroke="#888" stroke-width="1"/><rect x="956.5" y="186.5" width="16" height="447" fill="#fff" stroke="#c4c4c4" stroke-width="1"/><rect x="956.5" y="202.5" width="16" height="400" fill="#dcdcdc" stroke="#a6a6a6" stroke-width="1"/><path d="M957 616.5 H972" stroke="#c4c4c4" stroke-width="1"/><path d="M961.1 197.3 L964.4 193.3 L967.6999999999999 197.3" fill="none" stroke="#555" stroke-width="1.3"/><path d="M961.3000000000001 623.5 L964.6 627.5 L967.9 623.5" fill="none" stroke="#555" stroke-width="1.3"/><rect x="961" y="399" width="7" height="2" fill="#5a5a5a"/><rect x="961" y="402" width="7" height="2" fill="#5a5a5a"/><rect x="961" y="405" width="7" height="2" fill="#5a5a5a"/><rect x="907.5" y="476.5" width="16" height="79" fill="#fff" stroke="#c4c4c4" stroke-width="1"/><rect x="907.5" y="492.5" width="16" height="37" fill="#dcdcdc" stroke="#a6a6a6" stroke-width="1"/><path d="M908 538.5 H923" stroke="#c4c4c4" stroke-width="1"/><path d="M912.2 487.5 L915.5 483.5 L918.8 487.5" fill="none" stroke="#555" stroke-width="1.3"/><path d="M912.2 545.3 L915.5 549.3 L918.8 545.3" fill="none" stroke="#555" stroke-width="1.3"/><rect x="912" y="507.5" width="7" height="2" fill="#5a5a5a"/><rect x="912" y="510.5" width="7" height="2" fill="#5a5a5a"/><rect x="912" y="513.5" width="7" height="2" fill="#5a5a5a"/></svg>
<div class="a fv" style="left:828px;top:637px">1</div>
<div class="a" style="left:13px;top:656px;width:960px;height:22px;background:#fff;border:1px solid #a0a0a0"></div>
<div class="a" style="left:215px;top:658px;width:1px;height:19px;background:#c8c8c8"></div>
<div class="a" style="left:722px;top:658px;width:1px;height:19px;background:#c8c8c8"></div>
<div class="a" style="left:652px;top:658px;width:1px;height:19px;background:#c8c8c8"></div>
<div class="a" style="left:219px;top:659px;width:433px;height:17px;background:#f6f2f6"></div>
<div class="a" style="left:221px;top:661px;font-size:12px;word-spacing:1.3px">SELECT * FROM `dists` LIMIT 0, 1000</div>
<div class="a cj" style="left:726px;top:660px;font-size:12px;word-spacing:1.1px">第 1 条记录 (共 3 条) 于第 1 页</div>
</body></html>
